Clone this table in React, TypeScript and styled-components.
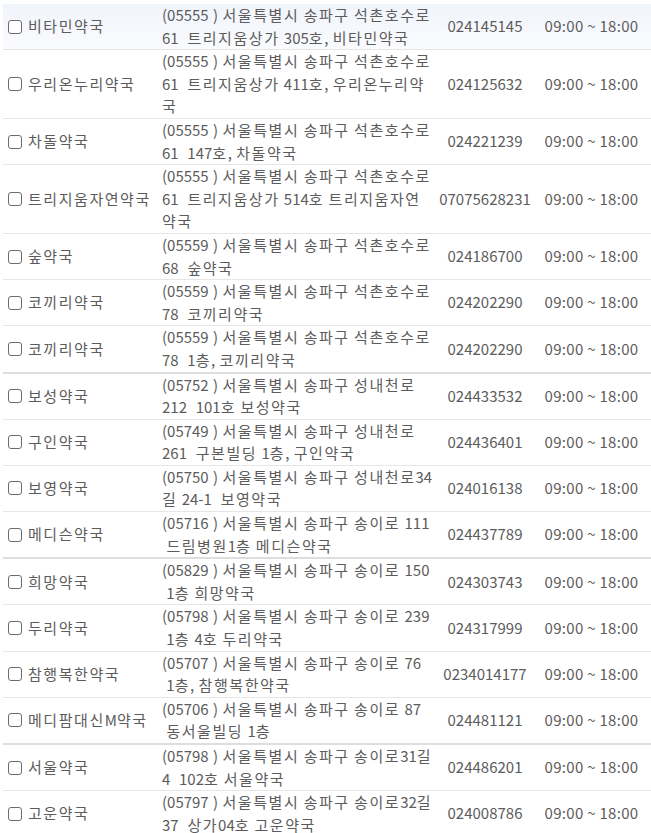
import React from 'react';
import styled, {createGlobalStyle} from 'styled-components';

const GlobalStyle = createGlobalStyle`
  html, body {
    margin: 0;
    padding: 0;
    background: #ffffff;
  }
  body {
    font-family: 'Noto Sans CJK KR', 'Noto Sans', sans-serif;
    color: #555;
  }
`;

const Root = styled.div`
  padding: 4px 0 0 3px;
  overflow: hidden;
`;

const Table = styled.table`
  width: 648px;
  table-layout: fixed;
  border-collapse: collapse;
  font-size: 15px;
  line-height: 22.6px;
  color: #5c5c5c;
`;

const Row = styled.tr<{highlighted?: boolean; divider?: boolean}>`
  background: ${({highlighted}) => highlighted
    ? 'linear-gradient(180deg, #f1f4fb 0%, #fafbfe 100%)'
    : 'transparent'};
  border-bottom: ${({divider}) => divider ? '2px solid #dedede' : '1px solid #e6e6e6'};
`;

const Cell = styled.td<{align?: 'left' | 'center'}>`
  padding: 0;
  vertical-align: middle;
  text-align: ${({align}) => align || 'left'};
  white-space: normal;
`;

const NameCell = styled(Cell)`
  padding-left: 5px;
`;

const AddressCell = styled(Cell)`
  padding: 0 4px;
  word-spacing: 1px;
`;

const TimeCell = styled(Cell)`
  letter-spacing: 0.3px;
`;

const NameLabel = styled.label`
  display: flex;
  align-items: center;
  gap: 6px;
  white-space: nowrap;
`;

const CheckBox = styled.span`
  width: 12px;
  height: 12px;
  border: 1.5px solid #6b6b6b;
  border-radius: 3px;
  background: #fff;
  flex: none;
`;

// Hangul in the original font runs a little wider than here
const Hangul = styled.span`
  letter-spacing: 1.55px;
`;

const Spaced = ({text}: {text: string}) => (
  <>
    {text.split(/([가-힣]+)/).map((part, i) =>
      /[가-힣]/.test(part) ? <Hangul key={i}>{part}</Hangul> : part
    )}
  </>
);

interface Pharmacy {
  name: string;
  address: string;
  phone: string;
}

const nb = '\u00a0';

const pharmacies: Pharmacy[] = [
  {name: '비타민약국', address: `(05555 ) 서울특별시 송파구 석촌호수로 61 ${nb}트리지움상가 305호, 비타민약국`, phone: '024145145'},
  {name: '우리온누리약국', address: `(05555 ) 서울특별시 송파구 석촌호수로 61 ${nb}트리지움상가 411호, 우리온누리약국`, phone: '024125632'},
  {name: '차돌약국', address: `(05555 ) 서울특별시 송파구 석촌호수로 61 ${nb}147호, 차돌약국`, phone: '024221239'},
  {name: '트리지움자연약국', address: `(05555 ) 서울특별시 송파구 석촌호수로 61 ${nb}트리지움상가 514호 트리지움자연약국`, phone: '07075628231'},
  {name: '숲약국', address: `(05559 ) 서울특별시 송파구 석촌호수로 68 ${nb}숲약국`, phone: '024186700'},
  {name: '코끼리약국', address: `(05559 ) 서울특별시 송파구 석촌호수로 78 ${nb}코끼리약국`, phone: '024202290'},
  {name: '코끼리약국', address: `(05559 ) 서울특별시 송파구 석촌호수로 78 ${nb}1층, 코끼리약국`, phone: '024202290'},
  {name: '보성약국', address: `(05752 ) 서울특별시 송파구 성내천로 212 ${nb}101호 보성약국`, phone: '024433532'},
  {name: '구인약국', address: `(05749 ) 서울특별시 송파구 성내천로 261 ${nb}구본빌딩 1층, 구인약국`, phone: '024436401'},
  {name: '보영약국', address: `(05750 ) 서울특별시 송파구 성내천로34길 24-1 ${nb}보영약국`, phone: '024016138'},
  {name: '메디슨약국', address: `(05716 ) 서울특별시 송파구 송이로 111 ${nb}드림병원1층 메디슨약국`, phone: '024437789'},
  {name: '희망약국', address: `(05829 ) 서울특별시 송파구 송이로 150 ${nb}1층 희망약국`, phone: '024303743'},
  {name: '두리약국', address: `(05798 ) 서울특별시 송파구 송이로 239 ${nb}1층 4호 두리약국`, phone: '024317999'},
  {name: '참행복한약국', address: `(05707 ) 서울특별시 송파구 송이로 76 ${nb}1층, 참행복한약국`, phone: '0234014177'},
  {name: '메디팜대신M약국', address: `(05706 ) 서울특별시 송파구 송이로 87 ${nb}동서울빌딩 1층`, phone: '024481121'},
  {name: '서울약국', address: `(05798 ) 서울특별시 송파구 송이로31길 4 ${nb}102호 서울약국`, phone: '024486201'},
  {name: '고운약국', address: `(05797 ) 서울특별시 송파구 송이로32길 37 ${nb}상가04호 고운약국`, phone: '024008786'},
];

// rows after which the list shows a heavier rule
const dividerRows = [6, 10, 14];

const App = () => {
  return (
    <Root>
      <GlobalStyle />
      <Table>
        <colgroup>
          <col style={{width: 155}} />
          <col style={{width: 280}} />
          <col style={{width: 94}} />
          <col style={{width: 119}} />
        </colgroup>
        <tbody>
          {pharmacies.map((p, i) => (
            <Row key={i} highlighted={i === 0} divider={dividerRows.includes(i)}>
              <NameCell>
                <NameLabel>
                  <CheckBox />
                  <span><Spaced text={p.name} /></span>
                </NameLabel>
              </NameCell>
              <AddressCell><Spaced text={p.address} /></AddressCell>
              <Cell align="center">{p.phone}</Cell>
              <TimeCell align="center">09:00 ~ 18:00</TimeCell>
            </Row>
          ))}
        </tbody>
      </Table>
    </Root>
  );
};

export default App;
